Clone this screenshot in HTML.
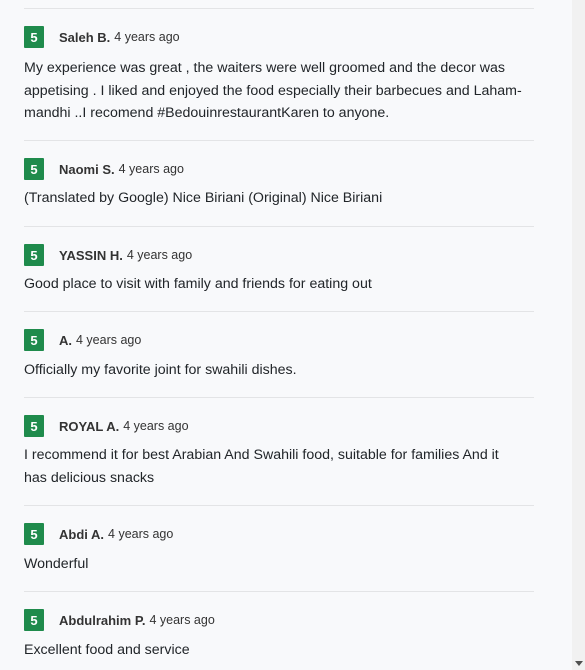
<!DOCTYPE html>
<html><head><meta charset="utf-8"><style>
html,body{margin:0;padding:0;width:585px;height:670px;overflow:hidden;background:#f8f9fb;font-family:"Liberation Sans",sans-serif;color:#212529}
.sb{position:absolute;left:572px;top:0;width:13px;height:670px;background:#f1f1f1}
.sb:after{content:"";position:absolute;left:3px;bottom:4px;border-left:4px solid transparent;border-right:4px solid transparent;border-top:5px solid #505050}
.sep{position:absolute;left:24px;width:510px;height:1px;background:#e3e4e6}
.hd{position:absolute;left:24px;height:22px;display:flex;align-items:center;white-space:nowrap}
.b{width:20px;height:22px;background:#1f8b4c;color:#fff;font-weight:bold;font-size:13px;display:flex;align-items:center;justify-content:center;border-radius:1px;margin-right:15px}
.n{font-weight:bold;font-size:13px;color:#333}
.t{font-size:12.5px;color:#333;margin-left:4px}
.tx{position:absolute;left:24px;font-size:14.2px;line-height:22.5px;white-space:nowrap;color:#212529}
</style></head><body>
<div class="sep" style="top:8px"></div>
<div class="hd" style="top:26px"><div class="b">5</div><span class="n">Saleh B.</span><span class="t">4 years ago</span></div>
<div class="tx" style="top:57px">My experience was great , the waiters were well groomed and the decor was<br>appetising . I liked and enjoyed the food especially their barbecues and Laham-<br>mandhi ..I recomend #BedouinrestaurantKaren to anyone.</div>
<div class="sep" style="top:140px"></div>
<div class="hd" style="top:158px"><div class="b">5</div><span class="n">Naomi S.</span><span class="t">4 years ago</span></div>
<div class="tx" style="top:187px">(Translated by Google) Nice Biriani (Original) Nice Biriani</div>
<div class="sep" style="top:226px"></div>
<div class="hd" style="top:244px"><div class="b">5</div><span class="n">YASSIN H.</span><span class="t">4 years ago</span></div>
<div class="tx" style="top:273px">Good place to visit with family and friends for eating out</div>
<div class="sep" style="top:311px"></div>
<div class="hd" style="top:329px"><div class="b">5</div><span class="n">A.</span><span class="t">4 years ago</span></div>
<div class="tx" style="top:359px">Officially my favorite joint for swahili dishes.</div>
<div class="sep" style="top:397px"></div>
<div class="hd" style="top:415px"><div class="b">5</div><span class="n">ROYAL A.</span><span class="t">4 years ago</span></div>
<div class="tx" style="top:444px">I recommend it for best Arabian And Swahili food, suitable for families And it<br>has delicious snacks</div>
<div class="sep" style="top:505px"></div>
<div class="hd" style="top:523px"><div class="b">5</div><span class="n">Abdi A.</span><span class="t">4 years ago</span></div>
<div class="tx" style="top:553px">Wonderful</div>
<div class="sep" style="top:591px"></div>
<div class="hd" style="top:609px"><div class="b">5</div><span class="n">Abdulrahim P.</span><span class="t">4 years ago</span></div>
<div class="tx" style="top:639px">Excellent food and service</div>
<div class="sb"></div>
</body></html>
